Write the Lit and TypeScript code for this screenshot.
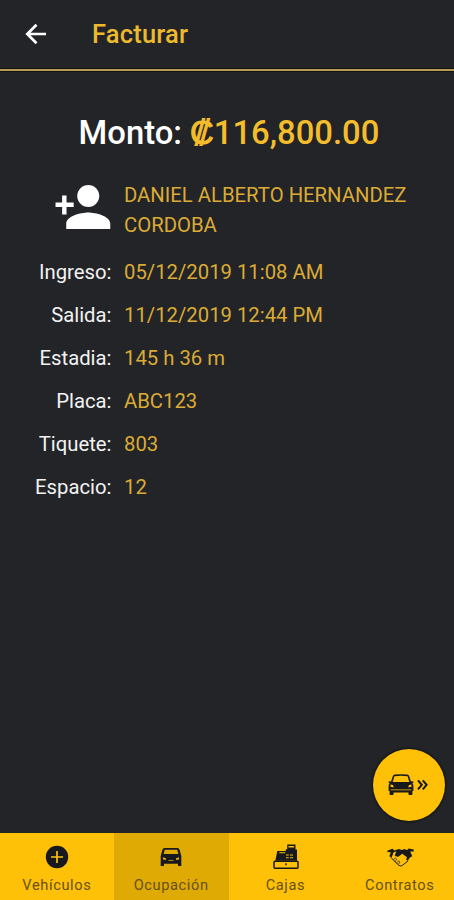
import { LitElement, html, css, svg } from "lit";
import { customElement, property } from "lit/decorators.js";

const icons: Record<string, unknown> = {
  plus: svg`<circle cx="12" cy="12" r="11.2" fill="#17191c"/><path d="M12 6v12M6 12h12" stroke="#ffc107" stroke-width="1.700"/>`,
  car: svg`<path fill="#17191c" fill-rule="evenodd" d="M3.400 4.800Q3.900 3 5.700 3h12.600q1.800 0 2.300 1.800L22.300 11v10h-3.300V18.800H5v2.200H1.700V11zM5.800 4.700 4.600 9h14.800L18.200 4.700zM4 12.300v2.200l3 .5v-1.800zM20 12.300v2.200l-3 .5v-1.800zM9.500 15.300v.8h5v-.8z"/>`,
  register: svg`<path fill="#17191c" fill-rule="evenodd" d="M13.700 -.5h8.300v5h1.500v11.300H1.800L3.800 6h8.500V4.300h1.400zM15 .9v1.500h5.600V.9zM5.800 7.300v1h6v-1zM12.500 9.500v1h2.800v-1zM16.500 9.500v1h3v-1zM12.500 12.300v1h2.800v-1zM16.500 12.300v1h3v-1z"/><path fill="none" stroke="#17191c" stroke-width="1.500" d="M1.500 16.200h22q1 0 1 1v5q0 1-1 1H1.500q-1 0-1-1v-5q0-1 1-1z"/><path fill="#17191c" d="M11.800 18.200h1.400v2h-1.400z"/>`,
  shake: svg`<path fill="#17191c" d="M.3 5 6 2.800l2.200 1.800L4.900 12.200l-2.300-.9L4.200 6.600.5 6.400zM29.600 3.800 24 2.500l-2 2.300 3.800 7.400 2.300-1-2.300-5.400 3.900.1z"/><path fill="#17191c" fill-rule="evenodd" d="M7.600 5 13 3.200l3.500.9 3-.9 3.300 1.600 3.400 7-3.300 4.400-1.700-1.300 1-2.600-5.200-3.800-4.800 3.400-3.700-1.500 1.900-4.500-4.500 1z"/><path fill="none" stroke="#17191c" stroke-width="1.100" d="M7.200 5.200 4.500 12.500l3 3.400 5.500 5.200q2 1.700 4 .3l6.500-5.200"/><path fill="none" stroke="#17191c" stroke-width=".75" d="m7 15.600 2.200-2.700 1.600 1.500-2 2.900M10.600 19l2.300-2.900 1.500 1.400-1.800 2.800"/>`,
};

@customElement("nav-tab")
class NavTab extends LitElement {
  @property() icon = "plus";
  @property() label = "";
  static styles = css`
    :host { display: flex; flex-direction: column; align-items: center; padding-top: 12px; box-sizing: border-box; }
    :host([active]) { background: #e0aa05; }
    svg { height: 24px; display: block; overflow: visible; }
    span { margin-top: 7px; font-size: 14.6px; line-height: 18px; letter-spacing: 0.62px; margin-right: 0.6px; color: #66501a; white-space: nowrap; }
  `;
  render() {
    const wide = this.icon === "shake";
    const till = this.icon === "register";
    return html`<svg width=${wide ? 27 : 26} viewBox=${wide ? "0 0 30 24" : till ? "0 0 25 24" : "0 0 24 24"}>${icons[this.icon]}</svg><span>${this.label}</span>`;
  }
}

@customElement("app-root")
class AppRoot extends LitElement {
  static styles = css`
    :host { display: flex; flex-direction: column; position: relative; height: 900px; overflow: hidden; background: #222428; font-family: Roboto, "Liberation Sans", sans-serif; color: #fff; }
    header { height: 69px; box-sizing: border-box; display: flex; align-items: center; padding: 0 0 1px 24px; }
    .rule { height: 2px; background: #b39a5a; box-shadow: 0 0 0 1px #16140f; }
    .back { width: 24px; height: 24px; }
    h1 { margin: 0 0 0 44px; font-size: 25.5px; font-weight: 500; line-height: 30px; color: #edb92e; letter-spacing: 0.2px; }
    h2 { margin: 42px 0 0; text-align: center; font-size: 32.8px; line-height: 40px; font-weight: 500; white-space: nowrap; padding-left: 4px; }
    .gold { color: #f4bd2b; }
    .colon { -webkit-text-stroke: 1px #f4bd2b; }
    .client { display: grid; grid-template-columns: 112px 1fr; column-gap: 12px; margin-top: 21px; height: 76px; }
    .client svg { width: 66px; height: 66px; justify-self: end; margin-right: -1px; }
    .name { padding-top: 6px; font-size: 20.300px; line-height: 30px; color: #dcab35; white-space: nowrap; }
    dl { margin: 0; display: grid; grid-template-columns: 111.500px 1fr; column-gap: 12.500px; grid-auto-rows: 43.100px; align-items: center; font-size: 20.300px; }
    dt { text-align: right; color: #f2f2f2; white-space: nowrap; }
    dd { margin: 0; color: #dcab35; white-space: nowrap; }
    .fab { position: absolute; left: 373px; top: 749px; width: 72px; height: 72px; border-radius: 50%; background: #ffc107; box-shadow: 0 0 2px 1px #121316; display: flex; align-items: center; justify-content: center; }
    nav { margin-top: auto; height: 67px; display: grid; grid-template-columns: repeat(4, 114.300px); background: #ffc107; }
  `;
  rows: [string, string][] = [
    ["Ingreso:", "05/12/2019 11:08 AM"],
    ["Salida:", "11/12/2019 12:44 PM"],
    ["Estadia:", "145 h 36 m"],
    ["Placa:", "ABC123"],
    ["Tiquete:", "803"],
    ["Espacio:", "12"],
  ];
  render() {
    return html`
      <header>
        <svg class="back" viewBox="0 0 24 24"><path d="M22 12H3.500M12.500 2.800 3.300 12l9.200 9.200" fill="none" stroke="#fff" stroke-width="2.700"/></svg>
        <h1>Facturar</h1>
      </header>
      <div class="rule"></div>
      <h2>Monto: <span class="gold"><span class="colon">₡</span>116,800.00</span></h2>
      <section class="client">
        <svg viewBox="0 0 24 24" fill="#fff"><circle cx="15" cy="8" r="4"/><path d="M15 14c-2.670 0-8 1.340-8 4v2h16v-2c0-2.660-5.330-4-8-4zM5.500 7.800h1.600v2.600h2.600V12H7.100v2.700H5.500V12H3.100v-1.600h2.400z"/></svg>
        <div class="name">DANIEL ALBERTO HERNANDEZ<br />CORDOBA</div>
      </section>
      <dl>${this.rows.map(([k, v]) => html`<dt>${k}</dt><dd>${v}</dd>`)}</dl>
      <div class="fab">
        <svg width="42" height="24" viewBox="0 0 42 24">
          <path fill="#17191c" fill-rule="evenodd" d="M4.800 3.200Q5.200 1.800 6.800 1.600q6.200-.8 12.400 0 1.600.2 2 1.600l1.800 5.300 2.300-.3v1.700l-1.100.2q1.200 1.200 1.200 2.900v5h-1v3.200q0 .8-.8.8h-2.300q-.8 0-.8-.8v-1.600H5.500v1.600q0 .8-.8.8H2.400q-.8 0-.8-.8V18H.6v-5q0-1.700 1.200-2.900L.7 9.900V8.200l2.300.3zM6.400 3.300 4.700 8.900h16.600l-1.700-5.600Q13 2.300 6.400 3.300zM2.500 11.400v2.400l3.300.7-.8-2.600zM23.500 11.400v2.400l-3.300.7.8-2.600zM2.600 16.400v.9h20.800v-.9z"/>
          <path d="m30 7.300 3.800 4.500-3.800 4.500M34.800 7.300l3.800 4.500-3.800 4.500" fill="none" stroke="#17191c" stroke-width="2"/>
        </svg>
      </div>
      <nav>
        <nav-tab icon="plus" label="Vehículos"></nav-tab>
        <nav-tab icon="car" label="Ocupación" active></nav-tab>
        <nav-tab icon="register" label="Cajas"></nav-tab>
        <nav-tab icon="shake" label="Contratos"></nav-tab>
      </nav>
    `;
  }
}
